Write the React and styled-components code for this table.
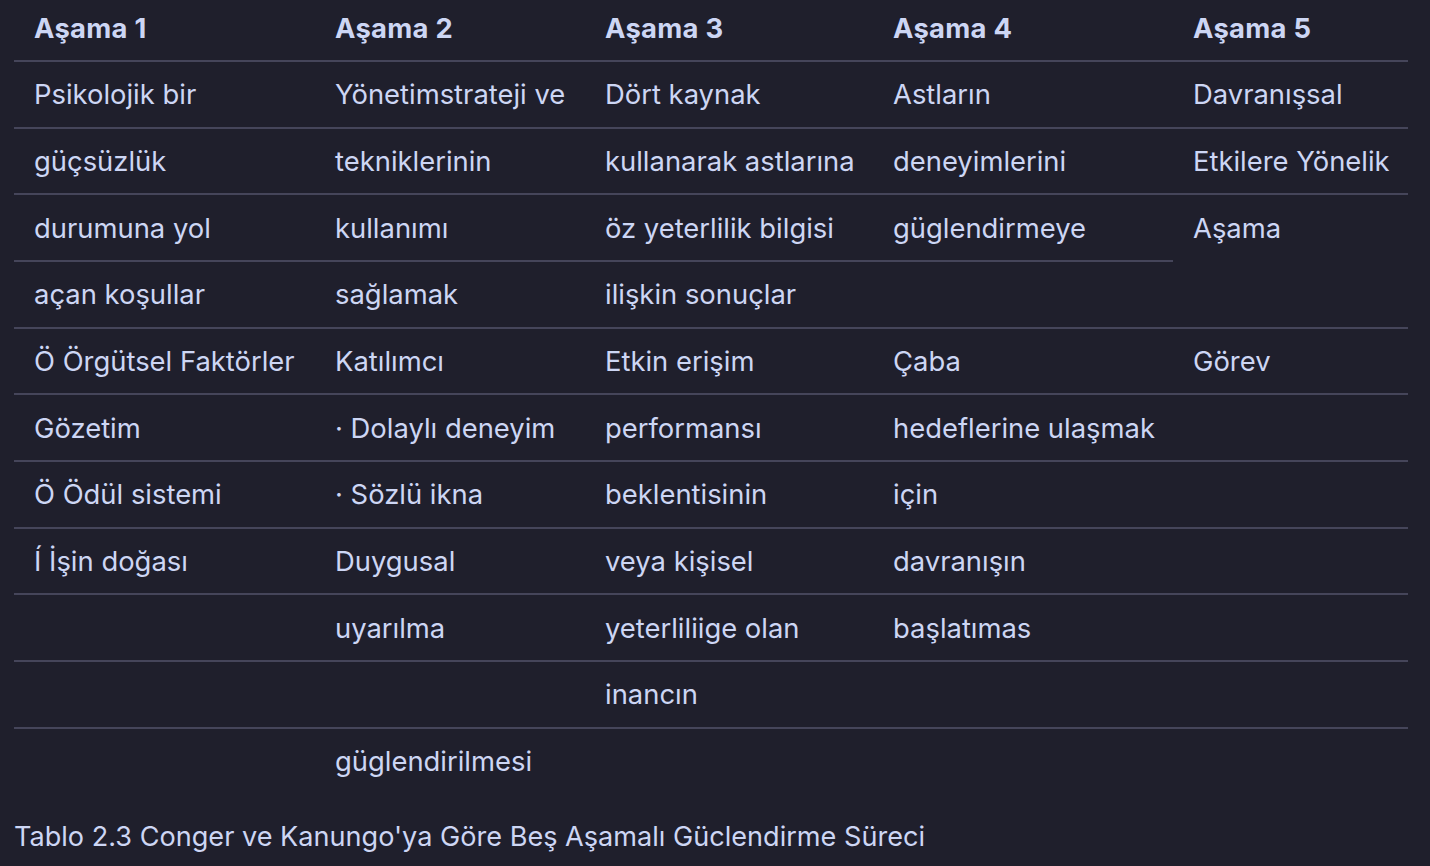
import styled, { createGlobalStyle } from "styled-components";

const Global = createGlobalStyle`
  html, body {
    margin: 0;
    padding: 0;
    background: #1f1f2c;
  }
  body {
    font-family: Inter, "Noto Sans", sans-serif;
    color: #cdd6f4;
  }
`;

const Page = styled.main`
  padding: 0 22px 0 14px;
  min-height: 866px;
  box-sizing: border-box;
`;

const Table = styled.table`
  width: 1394px;
  table-layout: fixed;
  border-collapse: collapse;
  font-size: 27.4px;
  line-height: 40px;
  caption-side: bottom;
`;

const Caption = styled.caption`
  text-align: left;
  padding-top: 24px;
  font-size: 27.1px;
  line-height: 40px;
`;

const Row = styled.tr`
  border-bottom: ${(p) => (p.last ? "none" : "2px solid #45455a")};
`;

const Th = styled.th`
  text-align: left;
  font-weight: 700;
  letter-spacing: 0.3px;
  padding: 8px 20px 12px;
  vertical-align: middle;
  white-space: nowrap;
`;

const Td = styled.td`
  padding: 12.33px 20px;
  vertical-align: top;
  white-space: nowrap;
`;

const cols = [301, 270, 288, 300, 235];

const head = ["Aşama 1", "Aşama 2", "Aşama 3", "Aşama 4", "Aşama 5"];

const rows = [
  ["Psikolojik bir", "Yönetimstrateji ve", "Dört kaynak", "Astların", "Davranışsal"],
  ["güçsüzlük", "tekniklerinin", "kullanarak astlarına", "deneyimlerini", "Etkilere Yönelik"],
  ["durumuna yol", "kullanımı", "öz yeterlilik bilgisi", "güglendirmeye", { text: "Aşama", span: 2 }],
  ["açan koşullar", "sağlamak", "ilişkin sonuçlar", ""],
  ["Ö Örgütsel Faktörler", "Katılımcı", "Etkin erişim", "Çaba", "Görev"],
  ["Gözetim", "· Dolaylı deneyim", "performansı", "hedeflerine ulaşmak", ""],
  ["Ö Ödül sistemi", "· Sözlü ikna", "beklentisinin", "için", ""],
  ["Í İşin doğası", "Duygusal", "veya kişisel", "davranışın", ""],
  ["", "uyarılma", "yeterliliige olan", "başlatımas", ""],
  ["", "", "inancın", "", ""],
  ["", "güglendirilmesi", "", "", ""],
];

export default function App() {
  return (
    <Page>
      <Global />
      <Table>
        <colgroup>
          {cols.map((w, i) => (
            <col key={i} style={{ width: w }} />
          ))}
        </colgroup>
        <thead>
          <Row>
            {head.map((h) => (
              <Th key={h}>{h}</Th>
            ))}
          </Row>
        </thead>
        <tbody>
          {rows.map((r, i) => (
            <Row key={i} last={i === rows.length - 1}>
              {r.map((c, j) =>
                typeof c === "object" ? (
                  <Td key={j} rowSpan={c.span}>
                    {c.text}
                  </Td>
                ) : (
                  <Td key={j}>{c}</Td>
                )
              )}
            </Row>
          ))}
        </tbody>
        <Caption>Tablo 2.3 Conger ve Kanungo'ya Göre Beş Aşamalı Güclendirme Süreci</Caption>
      </Table>
    </Page>
  );
}
